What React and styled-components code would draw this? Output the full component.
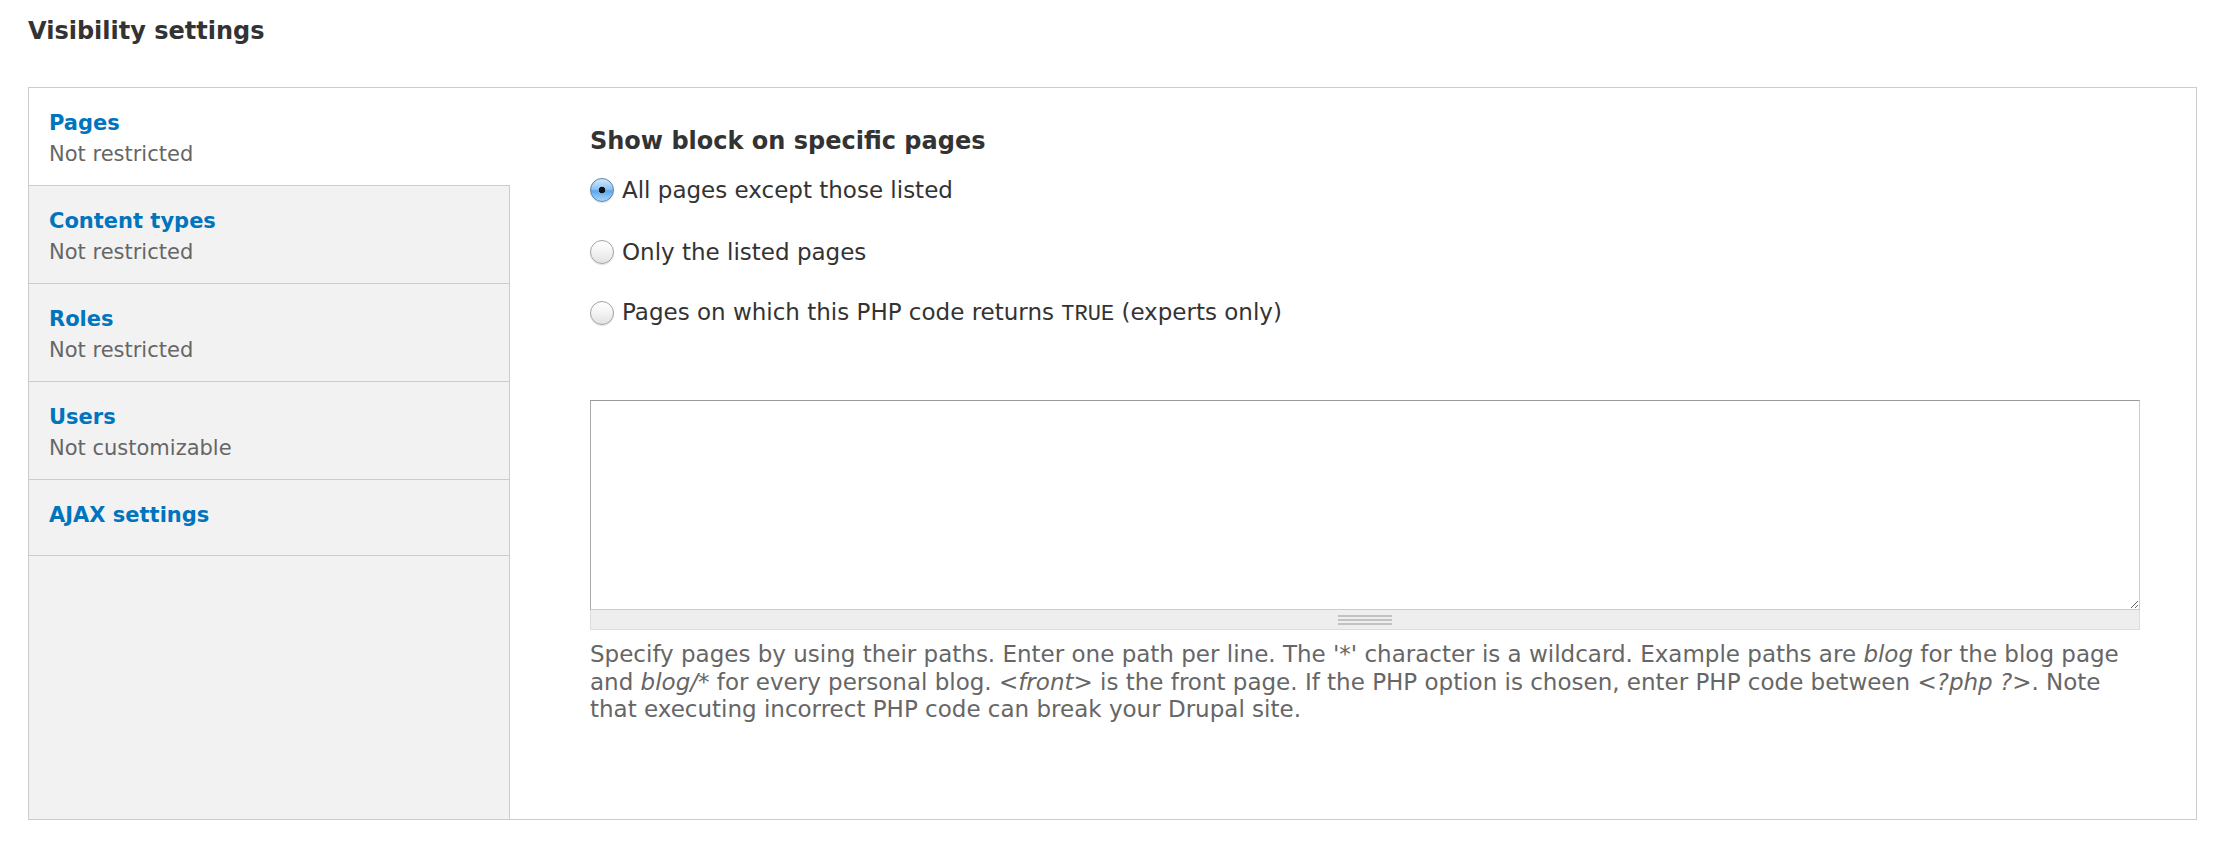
import React from "react";
import styled, { createGlobalStyle } from "styled-components";

const GlobalStyle = createGlobalStyle`
  html, body {
    margin: 0;
    padding: 0;
    background: #fff;
  }
  body {
    font-family: "DejaVu Sans", "Liberation Sans", sans-serif;
    color: #333;
  }
  * { box-sizing: border-box; }
`;

const Page = styled.div`
  padding: 16px 37px 0 28px;
`;

const Title = styled.h2`
  margin: 0 0 41px;
  font: 700 24px/30px "DejaVu Sans", sans-serif;
  color: #333;
`;

const Panel = styled.div`
  display: flex;
  border: 1px solid #ccc;
  background: #fff;
`;

const TabList = styled.ul`
  flex: 0 0 481px;
  margin: 0;
  padding: 0;
  list-style: none;
  background: #f2f2f2;
  border-right: 1px solid #ccc;
`;

const Tab = styled.li`
  padding: 19px 20px ${(p) => (p.$compact ? "24px" : "15px")} 20px;
  border-bottom: 1px solid #ccc;
  background: ${(p) => (p.$selected ? "#fff" : "transparent")};
  margin-right: ${(p) => (p.$selected ? "-1px" : "0")};
`;

const TabTitle = styled.a`
  display: block;
  font: 700 21px/32px "DejaVu Sans", sans-serif;
  color: #0074bd;
  text-decoration: none;
`;

const TabSummary = styled.span`
  display: block;
  font: 400 21px/31px "DejaVu Sans", sans-serif;
  color: #666;
`;

const Pane = styled.div`
  flex: 1;
  min-width: 0;
  padding: 38px 56px 95px 80px;
`;

const Heading = styled.h3`
  margin: 0 0 20px;
  font: 700 24px/30px "DejaVu Sans", sans-serif;
  color: #333;
`;

const RadioList = styled.div`
  display: flex;
  flex-direction: column;
  gap: 33.7px;
`;

const RadioRow = styled.label`
  display: flex;
  align-items: center;
  gap: 8px;
  height: 28px;
`;

const Radio = styled.span`
  flex: 0 0 24px;
  width: 24px;
  height: 24px;
  border-radius: 50%;
  border: 1px solid ${(p) => (p.$checked ? "#5b82ad" : "#a3a3a3")};
  background: ${(p) =>
    p.$checked
      ? "radial-gradient(circle at 50% 50%, #111 0 3px, transparent 3.6px), linear-gradient(#d3e8fc 0%, #8fc4f3 45%, #5ea8ec 55%, #a9d6fd 100%)"
      : "linear-gradient(#ffffff 0%, #f3f3f3 50%, #e2e2e2 100%)"};
  box-shadow: 0 1px 1px rgba(0, 0, 0, 0.12);
`;

const RadioLabel = styled.span`
  font: 400 23px/28px "DejaVu Sans", sans-serif;
  color: #333;
  white-space: nowrap;
`;

const Code = styled.code`
  font-family: "Liberation Mono", monospace;
  font-size: 22px;
`;

const Field = styled.div`
  margin-top: 72.7px;
`;

const TextArea = styled.textarea`
  display: block;
  width: 100%;
  height: 210px;
  margin: 0;
  padding: 6px 8px;
  border: 1px solid #ccc;
  border-top-color: #999;
  border-left-color: #aaa;
  background: #fff;
  resize: vertical;
  font: 400 20px/1.4 "DejaVu Sans", sans-serif;
  outline: none;
`;

const Grip = styled.div`
  height: 20px;
  background: #eee;
  border: 1px solid #ddd;
  border-top: none;
  padding-top: 5px;
`;

const GripLines = styled.div`
  width: 54px;
  height: 10px;
  margin: 0 auto;
  background: repeating-linear-gradient(
    to bottom,
    #c2c2c2 0 2px,
    transparent 2px 4px
  );
`;

const Description = styled.div`
  margin-top: 11px;
  font: 400 23px/27.7px "DejaVu Sans", sans-serif;
  color: #666;
`;

const tabs = [
  { title: "Pages", summary: "Not restricted", selected: true },
  { title: "Content types", summary: "Not restricted" },
  { title: "Roles", summary: "Not restricted" },
  { title: "Users", summary: "Not customizable" },
  { title: "AJAX settings" },
];

export default function App() {
  return (
    <>
      <GlobalStyle />
      <Page>
        <Title>Visibility settings</Title>
        <Panel>
          <TabList>
            {tabs.map((t) => (
              <Tab key={t.title} $selected={t.selected} $compact={!t.summary}>
                <TabTitle href="#">{t.title}</TabTitle>
                {t.summary && <TabSummary>{t.summary}</TabSummary>}
              </Tab>
            ))}
          </TabList>
          <Pane>
            <Heading>Show block on specific pages</Heading>
            <RadioList>
              <RadioRow>
                <Radio $checked />
                <RadioLabel>All pages except those listed</RadioLabel>
              </RadioRow>
              <RadioRow>
                <Radio />
                <RadioLabel>Only the listed pages</RadioLabel>
              </RadioRow>
              <RadioRow>
                <Radio />
                <RadioLabel>
                  Pages on which this PHP code returns <Code>TRUE</Code> (experts only)
                </RadioLabel>
              </RadioRow>
            </RadioList>
            <Field>
              <TextArea aria-label="Pages" />
              <Grip>
                <GripLines />
              </Grip>
            </Field>
            <Description>
              Specify pages by using their paths. Enter one path per line. The '*' character is a
              wildcard. Example paths are <em>blog</em> for the blog page and <em>blog/*</em> for
              every personal blog. <em>&lt;front&gt;</em> is the front page. If the PHP option is
              chosen, enter PHP code between <em>&lt;?php ?&gt;</em>. Note that executing incorrect
              PHP code can break your Drupal site.
            </Description>
          </Pane>
        </Panel>
      </Page>
    </>
  );
}
